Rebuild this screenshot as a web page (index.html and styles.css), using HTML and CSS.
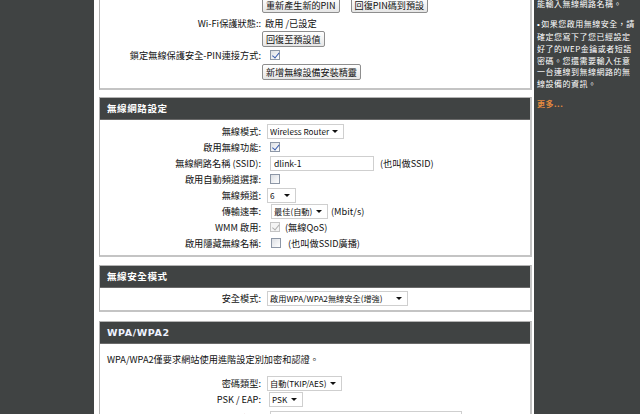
FILE: index.html
```html
<!DOCTYPE html>
<html lang="zh-Hant">
<head>
<meta charset="utf-8">
<title>無線網路設定</title>
<link rel="stylesheet" href="styles.css">
</head>
<body>
<div class="layout">
  <nav class="nav"></nav>

  <main class="main">
    <section class="box box-first">
      <div class="box-body body-wps">
        <div class="row row-btn">
          <span class="lbl"></span>
          <span class="fld"><button class="btn">重新產生新的PIN</button><button class="btn btn-gap">回復PIN碼到預設</button></span>
        </div>
        <div class="row row-status">
          <span class="lbl">Wi-Fi保護狀態::</span>
          <span class="fld val">啟用 /已設定</span>
        </div>
        <div class="row row-btn">
          <span class="lbl"></span>
          <span class="fld"><button class="btn">回復至預設值</button></span>
        </div>
        <div class="row">
          <span class="lbl">鎖定無線保護安全-PIN連接方式:</span>
          <span class="fld"><input type="checkbox" class="chk" checked></span>
        </div>
        <div class="row row-btn">
          <span class="lbl"></span>
          <span class="fld"><button class="btn">新增無線設備安裝精靈</button></span>
        </div>
      </div>
    </section>

    <section class="box">
      <h2 class="box-head">無線網路設定</h2>
      <div class="box-body body-net">
        <div class="row">
          <span class="lbl">無線模式:</span>
          <span class="fld"><span class="sel sel-mode"><select><option>Wireless Router</option></select><i class="caret"></i></span></span>
        </div>
        <div class="row">
          <span class="lbl">啟用無線功能:</span>
          <span class="fld"><input type="checkbox" class="chk" checked></span>
        </div>
        <div class="row">
          <span class="lbl">無線網路名稱 (SSID):</span>
          <span class="fld"><input type="text" class="txt txt-ssid" value="dlink-1"><span class="note note-ssid">(也叫做SSID)</span></span>
        </div>
        <div class="row">
          <span class="lbl">啟用自動頻道選擇:</span>
          <span class="fld"><input type="checkbox" class="chk"></span>
        </div>
        <div class="row">
          <span class="lbl">無線頻道:</span>
          <span class="fld"><span class="sel sel-ch"><select><option>6</option></select><i class="caret"></i></span></span>
        </div>
        <div class="row">
          <span class="lbl">傳輸速率:</span>
          <span class="fld"><span class="sel sel-rate"><select><option>最佳(自動)</option></select><i class="caret"></i></span><span class="note note-rate">(Mbit/s)</span></span>
        </div>
        <div class="row">
          <span class="lbl">WMM 啟用:</span>
          <span class="fld"><input type="checkbox" class="chk" checked disabled><span class="note note-qos">(無線QoS)</span></span>
        </div>
        <div class="row">
          <span class="lbl">啟用隱藏無線名稱:</span>
          <span class="fld"><input type="checkbox" class="chk chk-hide"><span class="note note-hide">(也叫做SSID廣播)</span></span>
        </div>
      </div>
    </section>

    <section class="box box-sec">
      <h2 class="box-head">無線安全模式</h2>
      <div class="box-body body-sec">
        <div class="row">
          <span class="lbl">安全模式:</span>
          <span class="fld"><span class="sel sel-sec"><select><option>啟用WPA/WPA2無線安全(增強)</option></select><i class="caret"></i></span></span>
        </div>
      </div>
    </section>

    <section class="box">
      <h2 class="box-head head-latin">WPA/WPA2</h2>
      <div class="box-body body-wpa">
        <p class="desc">WPA/WPA2僅要求網站使用進階設定別加密和認證。</p>
        <div class="row">
          <span class="lbl">密碼類型:</span>
          <span class="fld"><span class="sel sel-cipher"><select><option>自動(TKIP/AES)</option></select><i class="caret"></i></span></span>
        </div>
        <div class="row">
          <span class="lbl">PSK / EAP:</span>
          <span class="fld"><span class="sel sel-psk"><select><option>PSK</option></select><i class="caret"></i></span></span>
        </div>
        <div class="row row-key">
          <span class="lbl">網路密鑰:</span>
          <span class="fld"><input type="text" class="txt txt-key" value=""></span>
        </div>
      </div>
    </section>
  </main>

  <aside class="side">
    <p class="tip tip-first">能輸入無線網路名稱。</p>
    <p class="tip tip-bullet">如果您啟用無線安全，請確定您寫下了您已經設定好了的WEP金鑰或者短語密碼。您還需要輸入任意一台連線到無線網路的無線設備的資訊。</p>
    <a class="more" href="#">更多...</a>
  </aside>
</div>
</body>
</html>
```

FILE: styles.css
```css
* {
  box-sizing: border-box;
}

html,
body {
  margin: 0;
  padding: 0;
  height: 100%;
  overflow: hidden;
}

body {
  font-family: "Noto Sans CJK TC", "Noto Sans", sans-serif;
  font-size: 9.2px;
  color: #111;
  background: #fff;
}

.layout {
  display: flex;
  height: 414px;
}

.nav {
  flex: none;
  width: 94px;
  background: #404343;
}

.main {
  flex: none;
  width: 440px;
  padding: 0 2px 0 5px;
  background: #fff;
}

.side {
  flex: 1;
  background: #404343;
  color: #fff;
  padding: 0 5px 0 3px;
  font-size: 8px;
  letter-spacing: 0.5px;
  line-height: 11.8px;
}

/* boxes */
.box {
  border: 1px solid #b4b4b4;
  border-right: 2px solid #c4c4c4;
  border-bottom: 2px solid #c4c4c4;
  margin-bottom: 8px;
  background: #fff;
}

.box-first {
  margin-top: -6px;
  margin-bottom: 7px;
}

.box-sec {
  margin-bottom: 9px;
}

.box-head {
  margin: 0;
  height: 22px;
  padding-left: 7px;
  background: #404343;
  border-bottom: 1px solid #6a6a6a;
  color: #fff;
  font-family: "DejaVu Sans", "Noto Sans CJK TC", sans-serif;
  font-size: 9.5px;
  font-weight: bold;
  letter-spacing: 0.6px;
  line-height: 21px;
}

.head-latin {
  color: #eef2ff;
}

.body-wps {
  padding: 1px 0 8px;
}

.body-net {
  padding: 3px 0 4px;
}

.body-sec {
  padding: 2px 0 4px;
}

.body-wpa {
  padding: 9px 0 0;
}

.desc {
  margin: 0 0 10px;
  padding-left: 7px;
  line-height: 12px;
}

/* rows */
.row {
  display: grid;
  grid-template-columns: 161px 1fr;
  align-items: center;
  height: 16px;
}

.row-btn {
  height: 17px;
}

.row-status {
  padding-top: 2px;
  height: 17px;
}

.row-key {
  margin-top: 3px;
}

.lbl {
  text-align: right;
  white-space: nowrap;
}

.fld {
  display: flex;
  align-items: center;
  white-space: nowrap;
}

.val {
  padding-left: 4px;
}

/* buttons */
.btn {
  height: 16px;
  margin: 0 0 0 1px;
  padding: 0 3px;
  border: 1px solid #8e8e8e;
  border-radius: 2px;
  background: linear-gradient(#ffffff, #e6e6e6);
  color: #111;
  font-family: inherit;
  font-size: 9.1px;
  line-height: 14px;
}

.btn-gap {
  margin-left: 11px;
}

/* selects */
.sel {
  position: relative;
  display: inline-block;
  margin-left: 6px;
}

.sel select {
  appearance: none;
  -webkit-appearance: none;
  width: 100%;
  height: 15px;
  margin: 0;
  padding: 0 6px 0 2px;
  border: 1px solid #cfcfcf;
  border-radius: 0;
  background: #fff;
  color: #111;
  font-family: inherit;
  font-size: 8.2px;
  line-height: 13px;
}

.caret {
  position: absolute;
  right: 6px;
  top: 6px;
  width: 0;
  height: 0;
  border-left: 3px solid transparent;
  border-right: 3px solid transparent;
  border-top: 3px solid #111;
  pointer-events: none;
}

.sel-mode { width: 77px; }
.sel-ch { width: 29px; }
.sel-rate { width: 57px; margin-left: 10px; }
.sel-sec { width: 141px; }
.sel-cipher { width: 75px; }
.sel-psk { width: 34px; margin-left: 8px; }

/* text inputs */
.txt {
  height: 15px;
  margin: 0 0 0 9px;
  padding: 0 0 0 3px;
  border: 1px solid #cfcfcf;
  background: #fff;
  color: #111;
  font-family: inherit;
  font-size: 8.6px;
}

.txt-ssid { width: 104px; }
.txt-key { width: 192px; }

/* checkboxes */
.chk {
  appearance: none;
  -webkit-appearance: none;
  position: relative;
  width: 10px;
  height: 10px;
  margin: 0 0 0 9px;
  border: 1px solid #8d97a6;
  border-radius: 0;
  background: linear-gradient(135deg, #dcdfe4, #ffffff);
}

.chk:checked::after {
  content: "";
  position: absolute;
  left: 2.5px;
  top: 0;
  width: 2.5px;
  height: 5.5px;
  border-right: 1.5px solid #3b5fb0;
  border-bottom: 1.5px solid #3b5fb0;
  transform: rotate(40deg);
}

.chk:disabled {
  border-color: #c4c4c4;
  background: #f4f4f4;
}

.chk:disabled:checked::after {
  border-color: #b0b0b0;
}

.chk-hide {
  margin-left: 10px;
}

.note-ssid { margin-left: 6px; }
.note-rate { margin-left: 3px; }
.note-qos { margin-left: 5px; }
.note-hide { margin-left: 7px; }

/* sidebar */
.tip {
  margin: 0 0 8px;
}

.tip-first {
  margin-top: -2px;
  margin-bottom: 8.5px;
}

.tip-bullet::before {
  content: "•";
  margin-right: 1.5px;
  font-family: "Liberation Sans", sans-serif;
  letter-spacing: 0;
}

.more {
  display: block;
  color: #e58a3f;
  font-weight: bold;
  text-decoration: none;
}
```
